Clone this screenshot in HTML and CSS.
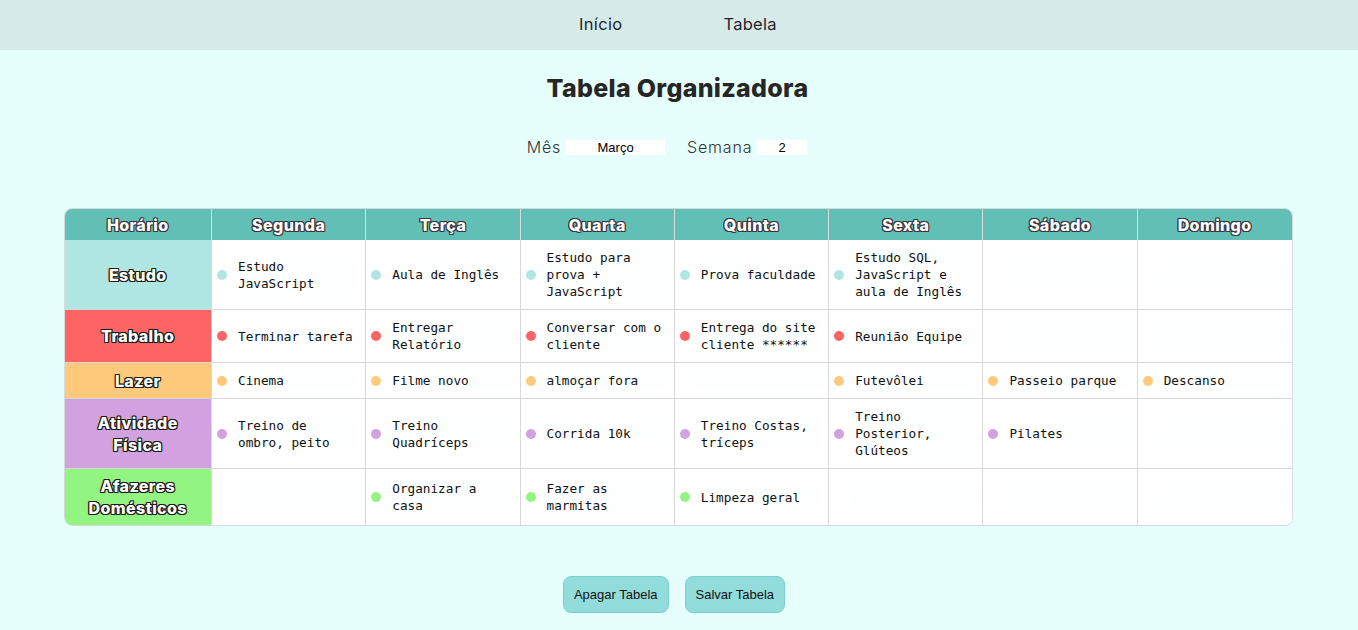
FILE: index.html
```html
<!DOCTYPE html>
<html lang="pt-BR">
<head>
<meta charset="utf-8">
<title>Tabela Organizadora</title>
<link rel="stylesheet" href="styles.css">
</head>
<body>
<nav class="topnav">
  <a href="#" class="navlink">Início</a>
  <a href="#" class="navlink">Tabela</a>
</nav>
<main class="page">
  <h1 class="title">Tabela Organizadora</h1>
  <div class="period">
    <label class="field"><span>Mês</span><input class="inp inp-month" value="Março"></label>
    <label class="field"><span>Semana</span><input class="inp inp-week" value="2"></label>
  </div>
  <div class="table-wrap">
    <table class="planner">
      <thead>
        <tr>
          <th class="col-h">Horário</th><th>Segunda</th><th>Terça</th><th>Quarta</th><th>Quinta</th><th>Sexta</th><th>Sábado</th><th>Domingo</th>
        </tr>
      </thead>
      <tbody>
        <tr class="r-estudo">
          <th class="lab">Estudo</th>
          <td><div class="item"><span class="dot"></span><div class="txt">Estudo JavaScript</div></div></td>
          <td><div class="item"><span class="dot"></span><div class="txt">Aula de Inglês</div></div></td>
          <td><div class="item"><span class="dot"></span><div class="txt">Estudo para prova + JavaScript</div></div></td>
          <td><div class="item"><span class="dot"></span><div class="txt">Prova faculdade</div></div></td>
          <td><div class="item"><span class="dot"></span><div class="txt">Estudo SQL, JavaScript e aula de Inglês</div></div></td>
          <td><div class="item empty"><div class="txt"></div></div></td>
          <td><div class="item empty"><div class="txt"></div></div></td>
        </tr>
        <tr class="r-trabalho">
          <th class="lab">Trabalho</th>
          <td><div class="item"><span class="dot"></span><div class="txt">Terminar tarefa</div></div></td>
          <td><div class="item"><span class="dot"></span><div class="txt">Entregar Relatório</div></div></td>
          <td><div class="item"><span class="dot"></span><div class="txt">Conversar com o cliente</div></div></td>
          <td><div class="item"><span class="dot"></span><div class="txt">Entrega do site cliente ******</div></div></td>
          <td><div class="item"><span class="dot"></span><div class="txt">Reunião Equipe</div></div></td>
          <td><div class="item empty"><div class="txt"></div></div></td>
          <td><div class="item empty"><div class="txt"></div></div></td>
        </tr>
        <tr class="r-lazer">
          <th class="lab">Lazer</th>
          <td><div class="item"><span class="dot"></span><div class="txt">Cinema</div></div></td>
          <td><div class="item"><span class="dot"></span><div class="txt">Filme novo</div></div></td>
          <td><div class="item"><span class="dot"></span><div class="txt">almoçar fora</div></div></td>
          <td><div class="item empty"><div class="txt"></div></div></td>
          <td><div class="item"><span class="dot"></span><div class="txt">Futevôlei</div></div></td>
          <td><div class="item"><span class="dot"></span><div class="txt">Passeio parque</div></div></td>
          <td><div class="item"><span class="dot"></span><div class="txt">Descanso</div></div></td>
        </tr>
        <tr class="r-ativ">
          <th class="lab">Atividade Física</th>
          <td><div class="item"><span class="dot"></span><div class="txt">Treino de ombro, peito</div></div></td>
          <td><div class="item"><span class="dot"></span><div class="txt">Treino Quadríceps</div></div></td>
          <td><div class="item"><span class="dot"></span><div class="txt">Corrida 10k</div></div></td>
          <td><div class="item"><span class="dot"></span><div class="txt">Treino Costas, tríceps</div></div></td>
          <td><div class="item"><span class="dot"></span><div class="txt">Treino Posterior, Glúteos</div></div></td>
          <td><div class="item"><span class="dot"></span><div class="txt">Pilates</div></div></td>
          <td><div class="item empty"><div class="txt"></div></div></td>
        </tr>
        <tr class="r-afaz">
          <th class="lab">Afazeres Domésticos</th>
          <td><div class="item empty"><div class="txt"></div></div></td>
          <td><div class="item"><span class="dot"></span><div class="txt">Organizar a casa</div></div></td>
          <td><div class="item"><span class="dot"></span><div class="txt">Fazer as marmitas</div></div></td>
          <td><div class="item"><span class="dot"></span><div class="txt">Limpeza geral</div></div></td>
          <td><div class="item empty"><div class="txt"></div></div></td>
          <td><div class="item empty"><div class="txt"></div></div></td>
          <td><div class="item empty"><div class="txt"></div></div></td>
        </tr>
      </tbody>
    </table>
  </div>
  <div class="actions">
    <button class="btn">Apagar Tabela</button>
    <button class="btn">Salvar Tabela</button>
  </div>
</main>
</body>
</html>
```
FILE: styles.css
```css
* { box-sizing: border-box; }
html, body { margin: 0; padding: 0; }
body {
  background: #e6fffd;
  font-family: Inter, "Open Sans", sans-serif;
  color: #222;
}
.topnav {
  height: 50px;
  background: #d6ebe9;
  display: flex;
  justify-content: center;
  align-items: center;
  gap: 101px;
  padding-right: 2px;
}
.navlink {
  font-size: 16.5px;
  letter-spacing: 0.3px;
  color: #25232b;
  text-decoration: none;
  padding-bottom: 2px;
}
.page {
  display: flex;
  flex-direction: column;
  align-items: center;
}
.title {
  margin: 23px 3px 0 0;
  font-size: 25px;
  line-height: 30px;
  font-weight: 800;
  color: #262626;
  letter-spacing: 0.3px;
}
.period {
  margin-top: 34px;
  margin-right: 24px;
  display: flex;
  gap: 22px;
  height: 20px;
  align-items: center;
}
.field {
  display: flex;
  align-items: center;
  gap: 5px;
  font-size: 16px;
  font-weight: 300;
  letter-spacing: 0.8px;
  color: #333;
}
.inp {
  border: none;
  background: #fff;
  height: 15px;
  padding: 0;
  font-family: "Liberation Sans", Arial, sans-serif;
  font-size: 13px;
  letter-spacing: 0;
  text-align: center;
  color: #000;
  outline: none;
}
.inp-month { width: 99px; }
.inp-week { width: 50px; }

.table-wrap {
  margin-top: 51px;
  margin-right: 2px;
  width: 1229px;
  border: 1px solid #d6dcdc;
  border-radius: 8px;
  overflow: hidden;
  background: #fff;
}
.planner {
  width: 100%;
  border-collapse: collapse;
  table-layout: fixed;
}
.planner thead th {
  background: #62bfb5;
  height: 31px;
  padding: 0;
  font-size: 16px;
  font-weight: 800;
  letter-spacing: 0.4px;
  color: #fff;
  border-left: 1px solid #d8dede;
  text-shadow: -1px -1px 0 #3a3640, 1px -1px 0 #3a3640, -1px 1px 0 #3a3640, 1px 1px 0 #3a3640, 0 1px 0 #3a3640, 0 -1px 0 #3a3640, 1px 0 0 #3a3640, -1px 0 0 #3a3640;
}
.planner thead th:first-child { border-left: none; }
.planner .col-h { width: 147px; }
.planner td {
  border-left: 1px solid #d8d8d8;
  border-top: 1px solid #d8d8d8;
  padding: 9px 0;
  background: #fff;
  vertical-align: middle;
}
.lab {
  border-top: 1px solid #d8d8d8;
  font-size: 16px;
  font-weight: 800;
  letter-spacing: 0.4px;
  line-height: 22px;
  color: #fff;
  padding: 6px 14px;
  text-shadow: -1px -1px 0 #1a1a1a, 1px -1px 0 #1a1a1a, -1px 1px 0 #1a1a1a, 1px 1px 0 #1a1a1a, 0 1px 0 #1a1a1a, 0 -1px 0 #1a1a1a, 1px 0 0 #1a1a1a, -1px 0 0 #1a1a1a, -2px -1px 0 rgba(240, 190, 60, 0.6);
}
tbody tr:first-child .lab, tbody tr:first-child td { border-top: none; }
.item {
  display: flex;
  align-items: center;
  padding-left: 5px;
  gap: 11px;
}
.item.empty { padding-left: 21px; }
.dot {
  width: 10px;
  height: 10px;
  border-radius: 50%;
  flex: none;
}
.txt {
  width: 120px;
  min-height: 17px;
  font-family: "DejaVu Sans Mono", "Liberation Mono", monospace;
  font-size: 12.7px;
  line-height: 17px;
  color: #111;
  background: #fdfefe;
}
.item.empty .txt { width: 128px; }
.r-estudo .lab { background: #b0e6e2; }
.r-estudo .dot { background: #b0e6e2; }
.r-trabalho .lab { background: #fe6464; }
.r-trabalho .dot { background: #fe6464; }
.r-lazer .lab { background: #ffc97b; }
.r-lazer .dot { background: #ffc97b; }
.r-ativ .lab { background: #d1a1e0; }
.r-ativ .dot { background: #d1a1e0; }
.r-afaz .lab { background: #92f582; }
.r-afaz .dot { background: #92f582; }

.actions {
  margin-top: 50px;
  margin-right: 10px;
  display: flex;
  gap: 16px;
}
.btn {
  height: 37px;
  padding: 0 10px;
  background: #92dcdc;
  border: 1px solid #7ccfcf;
  border-radius: 8px;
  font-family: "Liberation Sans", Arial, sans-serif;
  font-size: 13px;
  color: #111;
}
```
